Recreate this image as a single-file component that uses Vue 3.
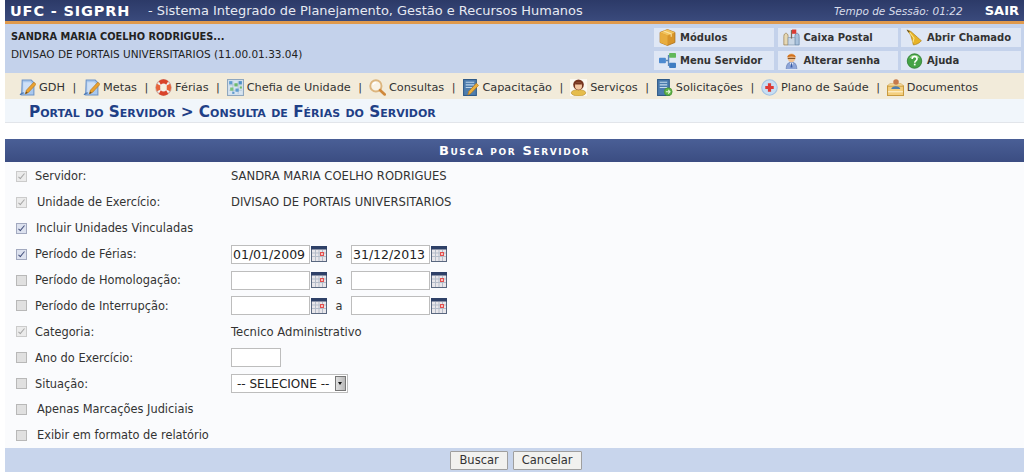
<script setup>
const ICONS = {
  note: '<path d="M3 1h8.500l2.500 2.500V15H2.500z" fill="#a9c8ee" stroke="#6d93c8"/><path d="M4 3h6.500l1.500 1.500V10L7 13H4z" fill="#cfe0f6"/><path d="M1 15c1-1.500 2-2 3.500-2" fill="none" stroke="#4f7ab5" stroke-width="1.200"/><path d="M6 14l1-3.500 7-7.500 2 2-7 7.500z" fill="#eba22e" stroke="#b97a1e" stroke-width=".7"/><path d="M6 14l.7-2.300 1.500 1.300z" fill="#6b4a20"/>',
  buoy: '<circle cx="8" cy="8" r="7.300" fill="#f3f1ee" stroke="#c9a9a0"/><path d="M3.500 2a7.500 7.500 0 0 1 9 0L10.500 5.500a3 3 0 0 0-5 0zM3.500 14a7.500 7.500 0 0 0 9 0L10.500 10.500a3 3 0 0 1-5 0z" fill="#d9432a"/><path d="M1.800 4.500a7.500 7.500 0 0 0 0 7L5 10V6z" fill="#e7633a"/><path d="M14.200 4.500a7.500 7.500 0 0 1 0 7L11 10V6z" fill="#e7633a"/><circle cx="8" cy="8" r="2.600" fill="#f4efe0"/>',
  chart: '<rect x=".5" y=".5" width="15" height="15" fill="#d7e4f0" stroke="#8fa7bf"/><path d="M2 5.500h12M2 10.500h12M5.500 2v12M10.500 2v12" stroke="#b8c9d9"/><rect x="2" y="2" width="3" height="3" fill="#5f9ccf"/><rect x="7" y="4" width="3" height="3" fill="#6dbb6a"/><rect x="11" y="2" width="3" height="3" fill="#4f8fc6"/><rect x="3" y="8" width="3" height="3" fill="#7cc47a"/><rect x="8" y="9" width="3" height="3" fill="#5f9ccf"/><rect x="12" y="7" width="2" height="2" fill="#6dbb6a"/><rect x="5" y="12" width="2" height="2" fill="#5f9ccf"/>',
  search: '<circle cx="6.500" cy="6.500" r="5.300" fill="#f9f3e6" stroke="#dcb57e" stroke-width="1.800"/><path d="M3.800 5.500a3 3 0 0 1 3-2.200" fill="none" stroke="#fff" stroke-width="1.200"/><path d="M10.500 10.500l4.300 4" stroke="#d0883a" stroke-width="2.600" stroke-linecap="round"/>',
  book: '<rect x="1.500" y=".5" width="12" height="15" fill="#4f7eae" stroke="#2f5a88"/><path d="M3.500 3h8M3.500 5.500h8M3.500 8h6" stroke="#bcd3ea"/><path d="M5.500 15l1-3.500 7-7.500 2 2-7 7.500z" fill="#eab03c" stroke="#b97a1e" stroke-width=".7"/>',
  person: '<rect width="16" height="16" fill="#fbf8f1"/><ellipse cx="8" cy="13" rx="6.800" ry="3" fill="#e6bd4c" stroke="#b98f2f" stroke-width=".6"/><circle cx="8" cy="5.500" r="5" fill="#763420"/><ellipse cx="8" cy="6.500" rx="3.300" ry="3.500" fill="#f3c6a2"/><path d="M4.500 5c1.500-2.500 5.500-2.500 7 0-2 .3-5 .3-7 0z" fill="#763420"/>',
  bookgo: '<rect x="1.500" y=".5" width="11" height="15" fill="#4b7cae" stroke="#2f5a88"/><path d="M3.500 3h7M3.500 5.500h7M3.500 8h7" stroke="#c5d9ec"/><circle cx="11.500" cy="12" r="3.700" fill="#5fb348" stroke="#3f8c2c" stroke-width=".6"/><path d="M9.300 12h3.600M11.500 10.300l1.700 1.700-1.700 1.700" fill="none" stroke="#e8f7df"/>',
  health: '<circle cx="8" cy="8" r="7.300" fill="#c8def3" stroke="#a4c3e2"/><path d="M6.500 4h3v2.500H12v3H9.500V12h-3V9.500H4v-3h2.500z" fill="#dd3a34"/>',
  docs: '<path d="M.5 6.500h15v9H.5z" fill="#f4cf7e" stroke="#c99a3e"/><path d="M.5 6.500l2-2h11l2 2z" fill="#fbe3ab" stroke="#c99a3e" stroke-width=".6"/><circle cx="8.500" cy="2.800" r="2.600" fill="#c77a4a"/><path d="M4 9.500c.5-3.500 8-3.500 8.500 0z" fill="#4f7eae"/><path d="M1 12h14" stroke="#fff3d2"/>',
  box: '<path d="M8 .5l7 2.700v9.500l-7 2.800-7-2.800V3.200z" fill="#d8952a" stroke="#a86a16" stroke-width=".7"/><path d="M8 .5l7 2.700L8 6 1 3.200z" fill="#f2c35c"/><path d="M1 3.200L8 6v9.500l-7-2.800z" fill="#e8ad3e"/><path d="M4.500 1.800l7 2.800v2.800" fill="none" stroke="#fbe4a4"/>',
  tree: '<rect x="0" y="5.500" width="6.500" height="5" rx=".8" fill="#4d8ad0"/><rect x="9.500" y="1" width="6.500" height="4.500" rx=".8" fill="#62b85a"/><rect x="9.500" y="10" width="6.500" height="5" rx=".8" fill="#3e7cc2"/><path d="M6.500 8H9V3.500h.5M9 8v4.500h.5" fill="none" stroke="#5a86b8" stroke-width="1.300"/>',
  mail: '<path d="M.8 7c0-2 1-3 2-3s2 1 2 3v8h-4z" fill="#e7d9b5" stroke="#9a8258" stroke-width=".7"/><path d="M11.200 7c0-2 1-3 2-3s2 1 2 3v8h-4z" fill="#a9c2dc" stroke="#6785a6" stroke-width=".7"/><path d="M4.800 8h6.400v7H4.800z" fill="#c9d7e6" stroke="#8097ae" stroke-width=".6"/><path d="M8 1v8" stroke="#7b6a58" stroke-width="1.200"/><path d="M8.500.5h4v4h-4z" fill="#db3a32"/>',
  user: '<path d="M3 16.500c0-5 2-7 5-7s5 2 5 7z" fill="#8ea5d8" stroke="#5f78ae" stroke-width=".6"/><path d="M6.500 10L8 14.500 9.500 10z" fill="#fff"/><path d="M7.500 10.500h1l.4 4H7.100z" fill="#3a5ea8"/><ellipse cx="8" cy="5.500" rx="3.700" ry="4.200" fill="#f0c090"/><path d="M4 5C4 1 12 1 12 5 9.500 4 6.500 4 4 5z" fill="#d0701c"/><path d="M4.500 6h7" stroke="#7a4a20"/>',
  bell: '<path d="M1 1c2 .5 3.500 1 5 2.500l5 4.500c1 1 2.500 2.200 3.500 3-1.500 2.200-5 3.800-7.500 4-.8-1.500-.8-3.800-1.500-5.500L4.500 6C3.800 4.500 2 2.800 1 1z" fill="#e7b328" stroke="#aa7c14" stroke-width=".6"/><path d="M3.500 3.500l4 5-1 4" fill="none" stroke="#fbe68c"/><path d="M.5.500l3 1.800-1 1z" fill="#5b4a20"/>',
  help: '<circle cx="8" cy="8.500" r="6.800" fill="#45a346" stroke="#2f7f33" stroke-width=".8"/><path d="M3 6a5.500 5.500 0 0 1 10 0c-3-1.500-7-1.500-10 0z" fill="#9ad58d"/><path d="M5.800 6.500c0-3 4.600-3 4.600 0 0 1.800-2.200 1.800-2.200 3.500" fill="none" stroke="#fff" stroke-width="1.500"/><rect x="7.400" y="11" width="1.600" height="1.600" fill="#fff"/>',
}

const USER_LINKS = [
  { label: 'Módulos', icon: 'box' },
  { label: 'Caixa Postal', icon: 'mail' },
  { label: 'Abrir Chamado', icon: 'bell' },
  { label: 'Menu Servidor', icon: 'tree' },
  { label: 'Alterar senha', icon: 'user' },
  { label: 'Ajuda', icon: 'help' },
]

const NAV = [
  { label: 'GDH', icon: 'note' },
  { label: 'Metas', icon: 'note' },
  { label: 'Férias', icon: 'buoy' },
  { label: 'Chefia de Unidade', icon: 'chart' },
  { label: 'Consultas', icon: 'search' },
  { label: 'Capacitação', icon: 'book' },
  { label: 'Serviços', icon: 'person' },
  { label: 'Solicitações', icon: 'bookgo' },
  { label: 'Plano de Saúde', icon: 'health' },
  { label: 'Documentos', icon: 'docs' },
]

const ROWS = [
  { label: 'Servidor:', locked: true, checked: true, text: 'SANDRA MARIA COELHO RODRIGUES' },
  { label: 'Unidade de Exercício:', locked: true, checked: true, indent: 2, text: 'DIVISAO DE PORTAIS UNIVERSITARIOS' },
  { label: 'Incluir Unidades Vinculadas', checked: true, indent: 1 },
  { label: 'Período de Férias:', checked: true, from: '01/01/2009', to: '31/12/2013', dates: true },
  { label: 'Período de Homologação:', from: '', to: '', dates: true },
  { label: 'Período de Interrupção:', from: '', to: '', dates: true },
  { label: 'Categoria:', locked: true, checked: true, text: 'Tecnico Administrativo' },
  { label: 'Ano do Exercício:', year: true },
  { label: 'Situação:', select: true },
  { label: 'Apenas Marcações Judiciais', indent: 2 },
  { label: 'Exibir em formato de relatório', indent: 2 },
]
</script>

<template>
  <div class="page">
    <header class="topbar">
      <div class="brand">UFC - SIGPRH</div>
      <div class="system">- Sistema Integrado de Planejamento, Gestão e Recursos Humanos</div>
      <div class="session">Tempo de Sessão: 01:22</div>
      <a class="logout">SAIR</a>
    </header>

    <section class="user-area">
      <div class="user-info">
        <strong>SANDRA MARIA COELHO RODRIGUES...</strong>
        <span>DIVISAO DE PORTAIS UNIVERSITARIOS (11.00.01.33.04)</span>
      </div>
      <div class="user-links">
        <a v-for="link in USER_LINKS" :key="link.label" class="user-link">
          <svg class="icon" viewBox="0 0 16 16" v-html="ICONS[link.icon]" />
          {{ link.label }}
        </a>
      </div>
    </section>

    <nav class="main-nav">
      <template v-for="(item, idx) in NAV" :key="item.label">
        <span v-if="idx > 0" class="sep">|</span>
        <a class="nav-item">
          <svg class="icon" viewBox="0 0 16 16" v-html="ICONS[item.icon]" />
          {{ item.label }}
        </a>
      </template>
    </nav>

    <h2 class="breadcrumb">Portal do Servidor &gt; Consulta de Férias do Servidor</h2>

    <form class="search-form" @submit.prevent>
      <div class="caption">Busca por Servidor</div>
      <div class="form-body">
        <div v-for="row in ROWS" :key="row.label" class="form-row">
          <input
            type="checkbox"
            class="check"
            :class="{ locked: row.locked }"
            :checked="row.checked"
            :disabled="row.locked"
          />
          <label :class="row.indent ? 'indent-' + row.indent : ''">{{ row.label }}</label>
          <div class="field">
            <span v-if="row.text" class="value">{{ row.text }}</span>
            <template v-if="row.dates">
              <input class="text-input date" type="text" :value="row.from" />
              <svg class="cal" viewBox="0 0 16 16">
                <rect x=".5" y=".5" width="15" height="15" fill="#e8e6ea" stroke="#59677f" />
                <rect width="16" height="3.500" fill="#2e4067" />
                <path d="M1 7h14M1 10.500h14M4.500 4v11M8 4v11M11.500 4v11" stroke="#b5bdca" />
                <rect x="9" y="6" width="4" height="4" fill="#e2504e" />
                <rect x="10.200" y="7.200" width="1.600" height="1.600" fill="#fff" />
              </svg>
              <span class="date-sep">a</span>
              <input class="text-input date" type="text" :value="row.to" />
              <svg class="cal" viewBox="0 0 16 16">
                <rect x=".5" y=".5" width="15" height="15" fill="#e8e6ea" stroke="#59677f" />
                <rect width="16" height="3.500" fill="#2e4067" />
                <path d="M1 7h14M1 10.500h14M4.500 4v11M8 4v11M11.500 4v11" stroke="#b5bdca" />
                <rect x="9" y="6" width="4" height="4" fill="#e2504e" />
                <rect x="10.200" y="7.200" width="1.600" height="1.600" fill="#fff" />
              </svg>
            </template>
            <input v-if="row.year" class="text-input year" type="text" />
            <div v-if="row.select" class="select">
              <span>-- SELECIONE --</span>
              <i class="select-btn"></i>
            </div>
          </div>
        </div>
      </div>
      <div class="form-actions">
        <button type="button" class="btn">Buscar</button>
        <button type="button" class="btn">Cancelar</button>
      </div>
    </form>
  </div>
</template>

<style>
html, body {
  margin: 0;
  background: #fff;
}
</style>

<style scoped>
.page {
  width: 1019px;
  height: 475px;
  margin-left: 5px;
  overflow: hidden;
  font-family: "DejaVu Sans", Verdana, sans-serif;
  font-size: 11.400px;
  color: #333;
}

.icon {
  width: 17px;
  height: 17px;
  flex: none;
}

/* top bar */
.topbar {
  display: flex;
  align-items: center;
  height: 21px;
  padding-left: 5px;
  background: linear-gradient(#2c3a68, #3a4a7c);
  border-bottom: 3px solid #e09a4c;
  color: #fff;
}

.brand {
  font-size: 14.500px;
  font-weight: 700;
  letter-spacing: .85px;
  width: 138px;
  white-space: nowrap;
}

.system {
  font-size: 12.950px;
  color: #e6e9f2;
  white-space: nowrap;
}

.session {
  margin-left: auto;
  font-size: 10.500px;
  font-style: italic;
  color: #d8dcea;
}

.logout {
  margin: 0 5px 0 22px;
  font-size: 13px;
  font-weight: 700;
}

/* user area */
.user-area {
  display: flex;
  justify-content: space-between;
  height: 49px;
  background: #c4d2eb;
}

.user-info {
  display: flex;
  flex-direction: column;
  gap: 6px;
  padding: 7px 0 0 6px;
  font-size: 10.500px;
  color: #222;
}

.user-info strong {
  font-size: 9.800px;
}

.user-links {
  display: grid;
  grid-template-columns: repeat(3, 120px);
  grid-auto-rows: 19px;
  gap: 4px 3.500px;
  padding: 4px 3px 0 0;
}

.user-link {
  display: flex;
  align-items: center;
  gap: 4px;
  padding-left: 5px;
  background: #dfe7f5;
  font-size: 10px;
  font-weight: 700;
  color: #333;
}

/* main menu */
.main-nav {
  display: flex;
  align-items: center;
  height: 26px;
  padding: 2px 0 0 14px;
  box-sizing: border-box;
  background: #f2ebda;
  font-size: 11.300px;
  white-space: nowrap;
}

.nav-item {
  display: flex;
  align-items: center;
  gap: 3px;
}

.sep {
  margin: 0 6.800px 0 7.500px;
}

/* breadcrumb */
.breadcrumb {
  margin: 0;
  height: 23px;
  padding: 0 0 0 24px;
  line-height: 27px;
  background: #f1f6fb;
  border-bottom: 1px solid #e2e5ea;
  font-size: 15.300px;
  font-weight: 700;
  font-variant: small-caps;
  color: #1f3f86;
  white-space: nowrap;
}

/* form */
.search-form {
  margin-top: 16px;
}

.caption {
  height: 23px;
  line-height: 23px;
  background: linear-gradient(#4a5f96, #3b4d82);
  color: #fff;
  font-size: 13px;
  font-weight: 700;
  font-variant: small-caps;
  letter-spacing: 1.600px;
  text-align: center;
}

.form-body {
  display: grid;
  grid-auto-rows: 25.900px;
  padding-top: 1px;
  background: #fafbfd;
}

.form-row {
  display: flex;
  align-items: center;
  box-sizing: border-box;
  padding: 1px 0 0 10px;
}

.check {
  appearance: none;
  flex: none;
  box-sizing: border-box;
  width: 11px;
  height: 11px;
  margin: 0 8px 0 1px;
  background: #e0e0e0;
  border: 1px solid #b8b8b8;
  position: relative;
}

.check:checked {
  background: #dde2ef;
  border-color: #a2a9bf;
}

.check:checked::after {
  content: "";
  position: absolute;
  left: 3px;
  top: 0;
  width: 2px;
  height: 6px;
  border: solid #44507c;
  border-width: 0 1.500px 1.500px 0;
  transform: rotate(40deg);
}

.check.locked:checked {
  background: #ebebeb;
  border-color: #cbcbcb;
}

.check.locked:checked::after {
  border-color: #a6a6a6;
}

label {
  width: 196px;
  flex: none;
  white-space: nowrap;
}

.indent-1 {
  padding-left: 1px;
  width: 195px;
}

.indent-2 {
  padding-left: 2px;
  width: 194px;
}

.field {
  display: flex;
  align-items: center;
  white-space: nowrap;
}

.value {
  font-size: 11.600px;
}

.text-input {
  box-sizing: border-box;
  height: 19px;
  padding: 0 1px;
  background: #fff;
  border: 1px solid #bdbdbd;
  font: 12.500px "DejaVu Sans", Verdana, sans-serif;
  color: #222;
  outline: none;
}

.date {
  width: 79px;
}

.year {
  width: 50px;
}

.cal {
  width: 16px;
  height: 16px;
  margin-left: 1px;
}

.date-sep {
  width: 24px;
  text-align: center;
}

.select {
  box-sizing: border-box;
  display: flex;
  align-items: center;
  justify-content: space-between;
  width: 117px;
  height: 19px;
  padding: 0 0 0 5px;
  background: #fff;
  border: 1px solid #bdbdbd;
  font-size: 12px;
  color: #222;
}

.select-btn {
  position: relative;
  width: 11px;
  height: 15px;
  margin-right: 1px;
  background: linear-gradient(90deg, #e0e0e0, #b8b8b8);
  border: 1px solid #777;
  box-sizing: border-box;
}

.select-btn::after {
  content: "";
  position: absolute;
  left: 2px;
  top: 5px;
  border: 2.500px solid transparent;
  border-top: 3px solid #111;
}

.form-actions {
  display: flex;
  justify-content: center;
  gap: 5px;
  height: 24px;
  padding: 3px 0 0 3px;
  box-sizing: border-box;
  background: #c8d5ec;
}

.btn {
  box-sizing: border-box;
  min-width: 56px;
  height: 19px;
  padding: 0 8px;
  background: #f1f1ef;
  border: 1px solid #9f9f9f;
  border-radius: 1px;
  font: 11.500px "DejaVu Sans", Verdana, sans-serif;
  color: #333;
}
</style>
